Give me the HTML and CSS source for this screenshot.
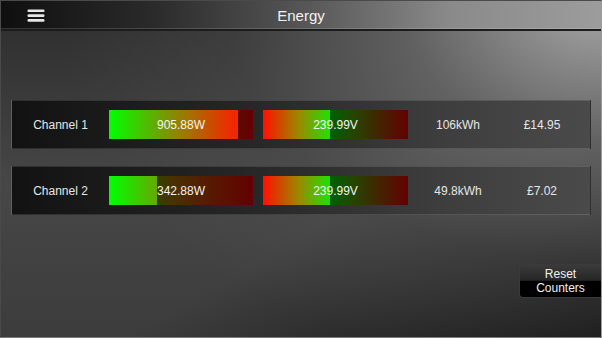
FILE: index.html
```html
<!DOCTYPE html>
<html>
<head>
<meta charset="utf-8">
<link rel="stylesheet" href="styles.css">
</head>
<body>
<div class="app">
  <header class="topbar">
    <button class="menu" aria-label="Menu">
      <svg width="18" height="13" viewBox="0 0 18 13"><rect x="0.5" y="0.5" width="17" height="2.6" rx="1.2" fill="#e6e6e6"/><rect x="0.5" y="5.3" width="17" height="2.6" rx="1.2" fill="#e6e6e6"/><rect x="0.5" y="10.1" width="17" height="2.6" rx="1.2" fill="#e6e6e6"/></svg>
    </button>
    <h1 class="title">Energy</h1>
  </header>
  <main class="content">
    <div class="row">
      <div class="label">Channel 1</div>
      <div class="bar power"><div class="fill" style="width:129px"></div><span class="val">905.88W</span></div>
      <div class="bar volt"><div class="fill" style="width:67px"></div><span class="val">239.99V</span></div>
      <div class="energy">106kWh</div>
      <div class="cost">£14.95</div>
    </div>
    <div class="row">
      <div class="label">Channel 2</div>
      <div class="bar power"><div class="fill" style="width:48px"></div><span class="val">342.88W</span></div>
      <div class="bar volt"><div class="fill" style="width:67px"></div><span class="val">239.99V</span></div>
      <div class="energy">49.8kWh</div>
      <div class="cost">£7.02</div>
    </div>
    <button class="reset">Reset<br>Counters</button>
  </main>
</div>
</body>
</html>
```
FILE: styles.css
```css
* { box-sizing: border-box; }
html, body { margin: 0; padding: 0; }
body {
  width: 602px; height: 338px; overflow: hidden;
  font-family: "Liberation Sans", Arial, sans-serif;
  background: #222;
}
.app {
  width: 602px; height: 338px;
  border: 1px solid #4a4a4a;
  border-right-color: #9a9a9a;
  border-bottom-color: #7a7a7a;
  display: flex; flex-direction: column;
  background:
    radial-gradient(ellipse 95% 120% at 100% 0%, rgba(175,175,175,0.95) 0%, rgba(120,120,120,0.65) 35%, rgba(90,90,90,0.3) 65%, rgba(80,80,80,0) 95%),
    linear-gradient(150deg, rgba(0,0,0,0) 60%, rgba(0,0,0,0.6) 100%),
    linear-gradient(180deg, #2c2c2c 0%, #474747 55%, #3c3c3c 100%);
}
.topbar {
  height: 30px; flex: none;
  display: flex; align-items: center; position: relative;
  background: linear-gradient(90deg, #0f0f0f 0%, #2a2a2a 25%, #555 50%, #8a8a8a 75%, #9c9c9c 100%);
  border-bottom: 2px solid #1c1c1c;
  box-shadow: inset 0 -1px 0 rgba(255,255,255,0.15);
}
.menu {
  background: none; border: 0; padding: 0;
  margin-left: 26px; width: 18px; height: 13px; display: block; margin-top: 1px;
}
.menu svg { display: block; }
.title {
  position: absolute; left: 0; right: 0; top: 0; bottom: 0;
  margin: 0; text-align: center; line-height: 29px;
  font-weight: normal; font-size: 15px; color: #f2f2f2;
  pointer-events: none;
}
.content {
  flex: 1; display: flex; flex-direction: column;
  padding: 69px 0 0 10px;
}
.row {
  width: 580px; height: 49px;
  border: 1px solid rgba(255,255,255,0.12);
  background: linear-gradient(90deg, #121212 0%, #262626 40%, #3e3e3e 75%, #4a4a4a 100%);
  display: grid;
  grid-template-columns: 97px 144px 155px 100px 68px 1fr;
  align-items: center;
  color: #e6e6e6; font-size: 12px;
}
.row + .row { margin-top: 17px; }
.label { text-align: center; }
.energy, .cost { text-align: center; }
.bar {
  height: 29px; position: relative; overflow: hidden;
  display: flex; align-items: center; justify-content: center;
}
.bar.volt { margin-left: 10px; }
.bar .fill {
  position: absolute; left: 0; top: 0; bottom: 0;
}
.bar.power {
  background: linear-gradient(90deg, #006a00 0%, #4a3000 45%, #640000 100%);
}
.bar.power .fill {
  background: linear-gradient(90deg, #00ff00 0%, #8a8a00 45%, #f02a00 85%, #ff1a00 100%);
  background-size: 144px 100%;
  background-repeat: no-repeat;
}
.bar.volt {
  background: linear-gradient(90deg, #600000 0%, #006200 46%, #2a4000 65%, #640000 100%);
}
.bar.volt .fill {
  background: linear-gradient(90deg, #ff1000 0%, #9a8a00 25%, #22e000 46%, #9a8a00 70%, #ff1000 100%);
  background-size: 145px 100%;
  background-repeat: no-repeat;
}
.val { position: relative; color: #f4f4f4; font-size: 12px; }
.reset {
  align-self: flex-end; margin-top: 49px;
  width: 82px; height: 34px; padding: 0;
  border: 1px solid #3a3a3a; border-right: 0; border-radius: 4px 0 0 4px;
  background: linear-gradient(180deg, #3a3a3a 0%, #262626 48%, #000 50%, #000 100%);
  color: #f0f0f0; font-family: "Liberation Sans", Arial, sans-serif;
  font-size: 12px; line-height: 14px;
}
```
